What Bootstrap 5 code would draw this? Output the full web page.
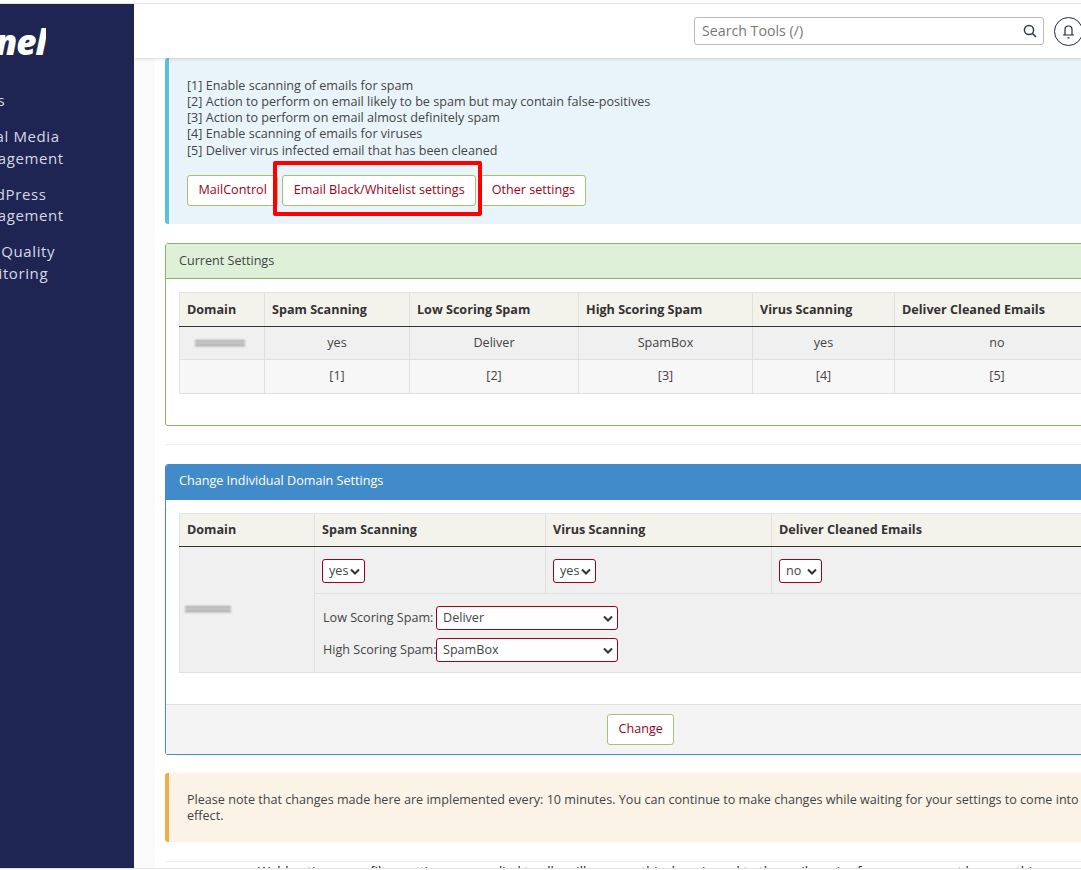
<!DOCTYPE html>
<html lang="en">
<head>
  <meta charset="UTF-8" />
  <meta name="viewport" content="width=device-width, initial-scale=1" />
  <title>Spam Filter Settings</title>
  <link href="https://cdn.jsdelivr.net/npm/bootstrap@5.3.3/dist/css/bootstrap.min.css" rel="stylesheet" />
  <style>
    html, body {
      height: 100%;
      overflow: hidden;
    }

    body {
      font-family: "Open Sans", "Liberation Sans", sans-serif;
      font-size: 12.6px;
      line-height: 16px;
      color: #444;
      background-color: #fff;
      padding-top: 3px;
    }

    a {
      text-decoration: none;
    }

    .page-frame {
      height: 866px;
      border-top: 1px solid #e5e5e5;
      border-bottom: 1px solid #e5e5e5;
      overflow: hidden;
    }

    .side-bar {
      width: 134px;
      flex: none;
      background-color: #1f2552;
      overflow: hidden;
    }

    .side-logo {
      width: 46px;
      height: 86px;
      padding-top: 16px;
      display: flex;
      justify-content: flex-end;
      overflow: hidden;
      font: italic 800 35px/44px "Open Sans", sans-serif;
      letter-spacing: -1px;
      color: #fff;
      white-space: nowrap;
    }

    .side-item {
      display: block;
      margin-left: -35px;
      margin-bottom: 14.5px;
      font-size: 15px;
      line-height: 21.5px;
      letter-spacing: .6px;
      color: #d5d8e5;
      white-space: nowrap;
    }

    .main-pane {
      flex: 1;
      min-width: 0;
      overflow: hidden;
    }

    .top-bar {
      height: 54px;
      background-color: #fff;
      box-shadow: 0 1px 3px rgba(0, 0, 0, .15);
      position: relative;
      z-index: 2;
    }

    .search-box {
      width: 350px;
      height: 28px;
      margin-left: 560px;
      padding: 0 6px 0 7px;
      border: 1px solid #b8b8be;
      border-radius: 3px;
      font-size: 14.2px;
      color: #777;
    }

    .bell-btn {
      width: 29px;
      height: 29px;
      flex: none;
      margin-left: 10px;
      border: 1px solid #1f2552;
      border-radius: 50%;
    }

    .scroll-area {
      height: 810px;
      overflow: hidden;
      padding-left: 21px;
      background-color: #fafafa;
    }

    .content-col {
      width: 959px;
      height: 100%;
      padding-left: 10px;
      background-color: #fff;
    }

    .note-box {
      padding: 20px 18px 18px;
      border-left: 4px solid;
      border-radius: 3px;
      color: #444;
    }

    .note-info {
      height: 166px;
      background-color: #e8f4fa;
      border-color: #5bc0de;
    }

    .note-warn {
      height: 69px;
      padding-top: 19px;
      margin-top: 18px;
      background-color: #faf3e6;
      border-color: #f0ad4e;
    }

    .note-last {
      margin-top: 1px;
    }

    .tab-btns {
      margin-top: 16px;
    }

    .pill-btn {
      display: inline-block;
      height: 31px;
      padding: 5px 10.5px;
      background-color: #fff;
      border: 1px solid #a8c073;
      border-radius: 3px;
      color: #a00020;
      font-size: 12.6px;
      line-height: 17px;
      white-space: nowrap;
    }

    .tab-marked {
      position: relative;
      margin: 0 4px;
    }

    .tab-marked::after {
      content: "";
      position: absolute;
      inset: -15px -7px -11px -10px;
      border: 4px solid #f00;
      border-radius: 2px;
    }

    .set-panel {
      border: 1px solid #8ab464;
      border-radius: 3px;
      overflow: hidden;
    }

    .panel-green {
      margin-top: 19px;
      height: 183px;
    }

    .panel-green .panel-head {
      padding-top: 9px;
      background-color: #dff0d8;
      border-bottom: 1px solid #8ab464;
      color: #444;
    }

    .panel-blue {
      height: 291px;
      border-color: #428bca;
    }

    .panel-blue .panel-head {
      background-color: #428bca;
      color: #fff;
    }

    .panel-head {
      height: 35px;
      padding: 8px 13px;
    }

    .table-wrap {
      padding: 13px 13px 0;
    }

    .set-table {
      width: 100%;
      table-layout: fixed;
      border-collapse: collapse;
      border: 1px solid #e4e4e4;
    }

    .set-table th {
      height: 34px;
      padding: 0 8px 0 7px;
      background-color: #f3f2eb;
      border-right: 1px solid #e0e0e0;
      border-bottom: 1px solid #333;
      font-size: 12.6px;
      font-weight: 700;
      color: #333;
    }

    .panel-blue .set-table th {
      height: 33px;
    }

    .set-table td {
      height: 33px;
      padding: 0 8px;
      border-right: 1px solid #e0e0e0;
      border-bottom: 1px solid #e0e0e0;
      text-align: center;
      vertical-align: middle;
    }

    .set-table .row-light td {
      height: 34px;
      padding-bottom: 1px;
    }

    .set-table .cell-tall {
      height: 47px;
      padding: 2px 8px 0 7px;
      text-align: left;
    }

    .set-table .cell-spam {
      padding-top: 8px;
      padding-bottom: 6px;
      text-align: left;
    }

    .row-dark td {
      background-color: #f0f0f0;
    }

    .row-light td {
      background-color: #f7f7f7;
    }

    .blur-name {
      display: block;
      height: 7px;
      background: repeating-linear-gradient(#a6a6a6 0 2px, #d8d8d8 2px 4px);
      filter: blur(1.3px);
    }

    .blur-short {
      width: 50px;
      margin-left: 7px;
    }

    .blur-side {
      width: 46px;
      margin-left: -3px;
    }

    .pick-box {
      width: 43px;
      height: 24px;
      padding: 0 0 0 6px;
      border: 1px solid #a00020;
      border-radius: 3px;
      appearance: none;
      background: #fff url("data:image/svg+xml,%3Csvg xmlns='http://www.w3.org/2000/svg' width='10' height='7'%3E%3Cpath d='M1 1.5 5 5.5 9 1.5' fill='none' stroke='%23333' stroke-width='2'/%3E%3C/svg%3E") no-repeat right 4px center;
      color: #444;
      font-family: inherit;
      font-size: 12.6px;
    }

    .pick-wide {
      width: 182px;
    }

    .spam-line {
      display: flex;
      align-items: center;
      height: 32px;
      white-space: nowrap;
    }

    .spam-line label {
      width: 113px;
      flex: none;
    }

    .panel-foot {
      height: 50px;
      margin-top: 31px;
      background-color: #f4f4f4;
      border-top: 1px solid #e0e0e0;
    }

    .foot-btn {
      margin-left: 441px;
    }

    .rule-line {
      height: 1px;
      margin: 18px 0 19px;
      background-color: #eee;
    }

    .rule-end {
      margin: 19px 0 0;
    }

    .cut-text {
      color: #111;
      font-size: 13px;
      white-space: nowrap;
      padding-left: 93px;
      margin-top: 1px;
    }
  </style>
</head>
<body>
<div class="page-frame d-flex">
  <!-- sidebar -->
  <div class="side-bar">
    <div class="side-logo">cPanel</div>
    <a class="side-item">Tools</a>
    <a class="side-item">Social Media<br />Management</a>
    <a class="side-item">WordPress<br />Management</a>
    <a class="side-item">Mail Quality<br />Monitoring</a>
  </div>

  <div class="main-pane">
    <div class="top-bar d-flex align-items-center">
      <div class="search-box d-flex align-items-center justify-content-between flex-shrink-0">
        <span>Search Tools (/)</span>
        <svg width="14" height="14" viewBox="0 0 14 14" fill="none" stroke="#2f3a4a" stroke-width="1.5"><circle cx="6" cy="6" r="4.6" /><path d="M9.4 9.4 13 13" /></svg>
      </div>
      <div class="bell-btn d-flex align-items-center justify-content-center">
        <svg width="13" height="15" viewBox="0 0 13 15" fill="none" stroke="#1f2552" stroke-width="1.2"><path d="M3 10.5V5.5a3.5 3.5 0 0 1 7 0v5M1 11h11M5.5 13.8h2" /></svg>
      </div>
    </div>

    <div class="scroll-area">
      <div class="content-col">
        <div class="note-box note-info">
          <div>[1] Enable scanning of emails for spam</div>
          <div>[2] Action to perform on email likely to be spam but may contain false-positives</div>
          <div>[3] Action to perform on email almost definitely spam</div>
          <div>[4] Enable scanning of emails for viruses</div>
          <div class="note-last">[5] Deliver virus infected email that has been cleaned</div>
          <div class="tab-btns d-flex">
            <a class="pill-btn">MailControl</a>
            <a class="pill-btn tab-marked">Email Black/Whitelist settings</a>
            <a class="pill-btn">Other settings</a>
          </div>
        </div>

        <div class="set-panel panel-green">
          <div class="panel-head">Current Settings</div>
          <div class="table-wrap">
            <table class="set-table">
              <colgroup>
                <col style="width:85px" /><col style="width:145px" /><col style="width:169px" /><col style="width:174px" /><col style="width:142px" /><col />
              </colgroup>
              <tr>
                <th>Domain</th><th>Spam Scanning</th><th>Low Scoring Spam</th><th>High Scoring Spam</th><th>Virus Scanning</th><th>Deliver Cleaned Emails</th>
              </tr>
              <tr class="row-dark">
                <td class="text-start"><span class="blur-name blur-short"></span></td><td>yes</td><td>Deliver</td><td>SpamBox</td><td>yes</td><td>no</td>
              </tr>
              <tr class="row-light">
                <td></td><td>[1]</td><td>[2]</td><td>[3]</td><td>[4]</td><td>[5]</td>
              </tr>
            </table>
          </div>
        </div>

        <div class="rule-line"></div>

        <div class="set-panel panel-blue">
          <div class="panel-head">Change Individual Domain Settings</div>
          <div class="table-wrap">
            <table class="set-table">
              <colgroup>
                <col style="width:135px" /><col style="width:231px" /><col style="width:226px" /><col />
              </colgroup>
              <tr>
                <th>Domain</th><th>Spam Scanning</th><th>Virus Scanning</th><th>Deliver Cleaned Emails</th>
              </tr>
              <tr class="row-dark">
                <td rowspan="2" class="text-start"><span class="blur-name blur-side"></span></td>
                <td class="cell-tall"><select class="pick-box"><option>yes</option><option>no</option></select></td>
                <td class="cell-tall"><select class="pick-box"><option>yes</option><option>no</option></select></td>
                <td class="cell-tall"><select class="pick-box"><option>no</option><option>yes</option></select></td>
              </tr>
              <tr class="row-dark">
                <td colspan="3" class="cell-spam">
                  <div class="spam-line"><label>Low Scoring Spam:</label><select class="pick-box pick-wide"><option>Deliver</option></select></div>
                  <div class="spam-line"><label>High Scoring Spam:</label><select class="pick-box pick-wide"><option>SpamBox</option></select></div>
                </td>
              </tr>
            </table>
          </div>
          <div class="panel-foot d-flex align-items-center">
            <a class="pill-btn foot-btn">Change</a>
          </div>
        </div>

        <div class="note-box note-warn">Please note that changes made here are implemented every: 10 minutes. You can continue to make changes while waiting for your settings to come into effect.</div>

        <div class="rule-line rule-end"></div>
        <div class="cut-text">Webhosting spam filter settings are applied to all mailboxes on this domain and to the mail service for every account here on this server today</div>
      </div>
    </div>
  </div>
</div>
<script src="https://cdn.jsdelivr.net/npm/bootstrap@5.3.3/dist/js/bootstrap.bundle.min.js"></script>
</body>
</html>
